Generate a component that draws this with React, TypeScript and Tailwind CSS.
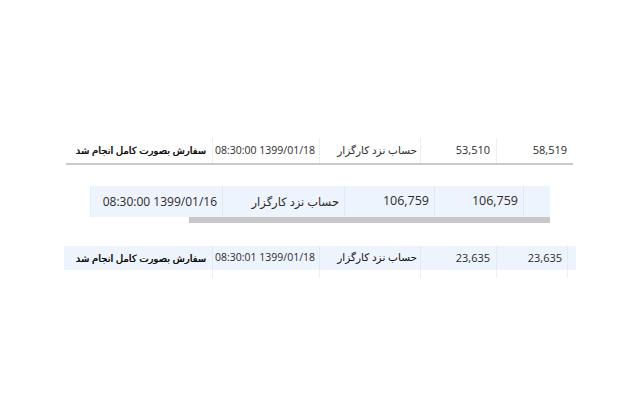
import React from "react";

const font = { fontFamily: '"Open Sans", "Noto Sans", "DejaVu Sans", sans-serif' };

export default function App() {
  return (
    <div className="w-[640px] h-[400px] bg-white text-[#2b2b2b] flex flex-col whitespace-nowrap" style={font}>
      {/* Row 1 */}
      <div className="mt-[138px] ml-[66px] w-[507px] h-[27px] flex border-b-2 border-[#c9c9c9] text-[11px]">
        <div className="w-[147px] flex items-center justify-end pr-[6px] border-r border-[#efefef] text-[10px] text-[#111] [text-shadow:0.4px_0_0_#111]">
          <span dir="rtl">سفارش بصورت کامل انجام شد</span>
        </div>
        <div className="w-[107px] flex items-center justify-end pr-[4px] border-r border-[#efefef] text-[10.5px]">
          <span dir="ltr">08:30:00 1399/01/18</span>
        </div>
        <div className="w-[101px] flex items-center justify-end pr-[3px] border-r border-[#efefef] text-[10.5px]">
          <span dir="rtl">حساب نزد کارگزار</span>
        </div>
        <div className="w-[76px] flex items-center justify-end pr-[6px] border-r border-[#efefef]">53,510</div>
        <div className="w-[76px] flex items-center justify-end pr-[6px]">58,519</div>
      </div>

      {/* Row 2 */}
      <div className="mt-[21px] ml-[90px] w-[460px] flex flex-col">
        <div className="h-[31px] flex bg-[#eef4fd] text-[12.5px]">
          <div className="w-[133px] flex items-center justify-end pr-[5px] border-r border-[#e0e8f3] border-l border-l-[#e6edf6] text-[12px]">
            <span dir="ltr">08:30:00 1399/01/16</span>
          </div>
          <div className="w-[122px] flex items-center justify-end pr-[5px] border-r border-[#e0e8f3] text-[11.5px]">
            <span dir="rtl">حساب نزد کارگزار</span>
          </div>
          <div className="w-[90px] flex items-center justify-end pr-[5px] border-r border-[#e0e8f3]">106,759</div>
          <div className="w-[89px] flex items-center justify-end pr-[5px] border-r border-[#e0e8f3]">106,759</div>
          <div className="w-[26px]"></div>
        </div>
        <div className="ml-[99px] w-[361px] h-[6px] bg-[#c8c8c8]"></div>
      </div>

      {/* Row 3 */}
      <div className="mt-[23px] ml-[64px] w-[512px] flex flex-col text-[11px]">
        <div className="h-[24px] flex bg-[#eef4fd]">
          <div className="w-[149px] flex items-center justify-end pr-[6px] border-r border-[#e3eaf4] text-[10px] text-[#111] [text-shadow:0.4px_0_0_#111]">
            <span dir="rtl">سفارش بصورت کامل انجام شد</span>
          </div>
          <div className="w-[107px] flex items-center justify-end pr-[4px] border-r border-[#e3eaf4] text-[10.5px]">
            <span dir="ltr">08:30:01 1399/01/18</span>
          </div>
          <div className="w-[101px] flex items-center justify-end pr-[3px] border-r border-[#e3eaf4] text-[10.5px] text-[#111]">
            <span dir="rtl">حساب نزد کارگزار</span>
          </div>
          <div className="w-[76px] flex items-center justify-end pr-[6px] border-r border-[#e3eaf4]">23,635</div>
          <div className="w-[71px] flex items-center justify-end pr-[5px] border-r border-[#e3eaf4]">23,635</div>
          <div className="w-[8px]"></div>
        </div>
        <div className="h-[8px] flex">
          <div className="w-[149px] border-r border-[#efefef]"></div>
          <div className="w-[107px] border-r border-[#efefef]"></div>
          <div className="w-[101px] border-r border-[#efefef]"></div>
          <div className="w-[76px] border-r border-[#efefef]"></div>
          <div className="w-[71px] border-r border-[#efefef]"></div>
        </div>
      </div>
    </div>
  );
}
